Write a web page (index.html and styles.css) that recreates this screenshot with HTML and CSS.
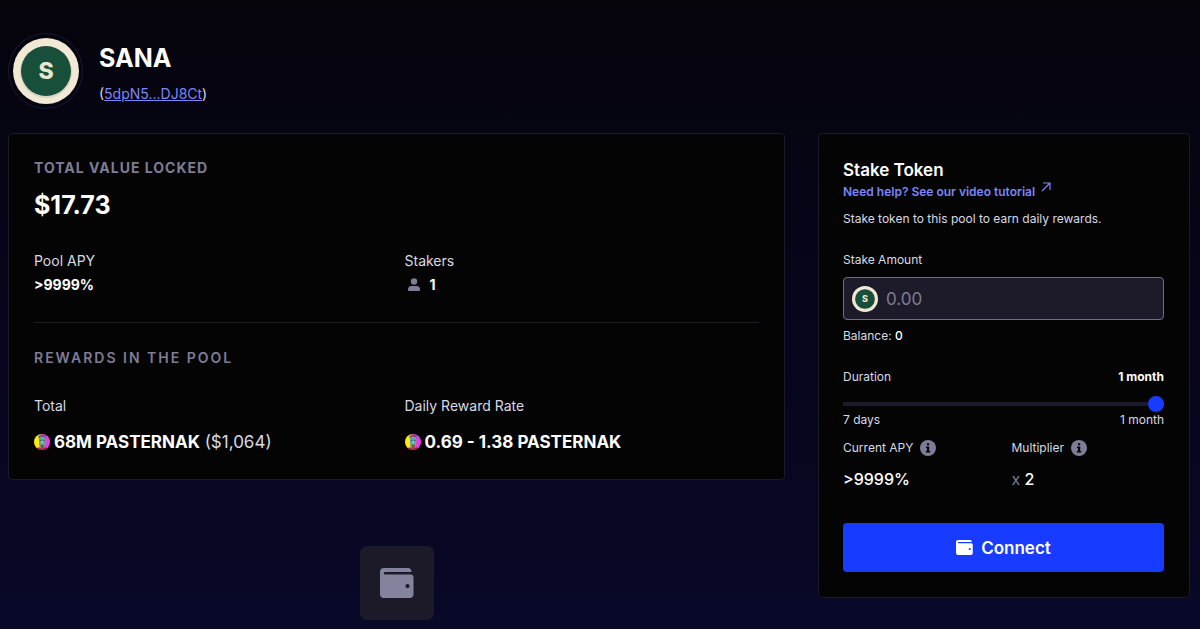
FILE: index.html
```html
<!DOCTYPE html>
<html lang="en">
<head>
<meta charset="utf-8">
<meta name="viewport" content="width=device-width, initial-scale=1">
<title>SANA staking pool</title>
<link rel="stylesheet" href="styles.css">
</head>
<body>
<svg class="defs" aria-hidden="true">
  <defs>
    <linearGradient id="face-bg"><stop offset="0.3" stop-color="#ffe814"/><stop offset="0.62" stop-color="#f03ae6"/></linearGradient>
    <clipPath id="round"><circle cx="8" cy="8" r="8"/></clipPath>
    <symbol id="sana" viewBox="0 0 66 66">
      <circle cx="33" cy="33" r="33" fill="#f1e8d5"/>
      <circle cx="33" cy="34" r="26" fill="#d8d3c2"/>
      <circle cx="33" cy="33" r="25" fill="#174f3b"/>
      <text class="coin-letter" x="33" y="41" text-anchor="middle">S</text>
    </symbol>
    <symbol id="pasternak" viewBox="0 0 16 16">
      <g clip-path="url(#round)">
        <rect width="16" height="16" fill="url(#face-bg)"/>
        <path d="M1 16c1-3 4-2.500 7-2.500s6-.5 7 2.500z" fill="#b3123c"/>
        <path d="M5 4.500C5 2 6 1.500 8 1.500s3.300.8 3.300 3.500v4.500c0 3-1.500 5-3.300 5S5 12.500 5 9.500z" fill="#62a9a5"/>
        <path d="M4.300 4.500C4 1.500 5.500.5 8.500.5S12.300 2 11.800 4.500l-1-1.500H5.500z" fill="#4a5fa0"/>
        <path d="M4.500 3.300l3-1.500 1 .8-3.500 1.600z" fill="#d4475c"/>
        <path d="M5.800 6.300h1.600M8.900 6.300h1.600" stroke="#263f58" stroke-width=".8"/>
        <path d="M8.200 7v2.500" stroke="#a6d8cc"/>
        <path d="M6.300 11q1.700-1.200 3.800 0l-.8 3H7.200z" fill="#7d553f"/>
      </g>
    </symbol>
    <symbol id="wallet" viewBox="0 0 34 30">
      <path fill="currentColor" fill-rule="evenodd" d="M4 0h24a3.500 3.500 0 0 1 3.500 4H5a1.200 1.200 0 0 0 0 2.400h25.500a3 3 0 0 1 3 3V26a4 4 0 0 1-4 4H4a4 4 0 0 1-4-4V4a4 4 0 0 1 4-4zm23.500 16a2.100 2.100 0 1 0 0 4.200 2.100 2.100 0 0 0 0-4.200z"/>
    </symbol>
    <symbol id="info" viewBox="0 0 16 16">
      <circle cx="8" cy="8" r="8" fill="#7f7c96"/>
      <path d="M6.900 3.200h2.300v2.100H6.900zM6 6.500h3.200v4.400h1v1.500H5.900v-1.500h1V8H6z" fill="#050505"/>
    </symbol>
  </defs>
</svg>

<header class="pool-header">
  <div class="avatar"><svg class="avatar-coin" role="img" aria-label="SANA"><use href="#sana"/></svg></div>
  <div class="pool-heading">
    <h1 class="pool-name">SANA</h1>
    <p class="address">(<a href="#token">5dpN5...DJ8Ct</a>)</p>
  </div>
</header>

<main class="layout">
  <div class="main-column">
    <section class="card">
      <h2 class="section-title">TOTAL VALUE LOCKED</h2>
      <p class="tvl">$17.73</p>
      <div class="stats">
        <div>
          <p class="label">Pool APY</p>
          <p class="value">&gt;9999%</p>
        </div>
        <div>
          <p class="label">Stakers</p>
          <p class="value stakers">
            <svg class="user-icon" viewBox="0 0 12 14" aria-hidden="true"><circle cx="6" cy="3.500" r="3.200" fill="#7f7c96"/><path d="M3.500 8h5Q12 8 12 11.500V12q0 1-1 1H1q-1 0-1-1v-.5Q0 8 3.500 8z" fill="#7f7c96"/></svg>
            1
          </p>
        </div>
      </div>
      <hr class="divider">
      <h2 class="section-title wide">REWARDS IN THE POOL</h2>
      <div class="stats">
        <div>
          <p class="label">Total</p>
          <p class="reward"><svg class="token-icon" aria-hidden="true"><use href="#pasternak"/></svg><span><strong>68M PASTERNAK</strong> ($1,064)</span></p>
        </div>
        <div>
          <p class="label">Daily Reward Rate</p>
          <p class="reward"><svg class="token-icon" aria-hidden="true"><use href="#pasternak"/></svg><strong>0.69 - 1.38 PASTERNAK</strong></p>
        </div>
      </div>
    </section>
    <div class="wallet-tile"><svg class="wallet-large" aria-hidden="true"><use href="#wallet"/></svg></div>
  </div>

  <form class="card stake">
    <h2 class="stake-title">Stake Token</h2>
    <a class="help" href="#tutorial">Need help? See our video tutorial
      <svg class="arrow" viewBox="0 0 10 10" aria-hidden="true"><path d="M1 9l8-8M2 1h7v7" fill="none" stroke="currentColor" stroke-width="1.200"/></svg>
    </a>
    <p class="intro">Stake token to this pool to earn daily rewards.</p>

    <label class="amount-label" for="amount">Stake Amount</label>
    <div class="amount-box">
      <svg class="amount-coin" aria-hidden="true"><use href="#sana"/></svg>
      <input class="amount" id="amount" type="text" inputmode="decimal" placeholder="0.00">
    </div>
    <p class="balance">Balance: <b>0</b></p>

    <div class="row duration">
      <label for="duration">Duration</label>
      <output class="chosen" for="duration">1 month</output>
    </div>
    <input class="slider" id="duration" type="range" min="7" max="30" value="30">
    <div class="row limits"><span>7 days</span><span>1 month</span></div>

    <div class="figures">
      <div>
        <p class="figure-label">Current APY <svg class="info" aria-hidden="true"><use href="#info"/></svg></p>
        <p class="figure">&gt;9999%</p>
      </div>
      <div>
        <p class="figure-label">Multiplier <svg class="info" aria-hidden="true"><use href="#info"/></svg></p>
        <p class="figure"><span class="times">x</span> 2</p>
      </div>
    </div>

    <button class="connect" type="button"><svg class="wallet-small" aria-hidden="true"><use href="#wallet"/></svg>Connect</button>
  </form>
</main>
</body>
</html>
```

FILE: styles.css
```css
* {
  box-sizing: border-box;
}

html {
  min-height: 100%;
  background: linear-gradient(#05040b 0%, #06051a 45%, #080828 100%);
}

body {
  margin: 0;
  padding: 33px 10px 9px 8px;
  color: #d8dae5;
  font-family: Inter, "Liberation Sans", sans-serif;
  font-size: 14px;
  line-height: 24px;
}

h1,
h2,
p {
  margin: 0;
}

a {
  color: #7b87f8;
}

.defs {
  position: absolute;
  width: 0;
  height: 0;
}

.coin-letter {
  fill: #e9e6cf;
  font-size: 23px;
  font-weight: 800;
}

/* Header */
.pool-header {
  display: flex;
  align-items: center;
  gap: 16px;
  margin-bottom: 24px;
}

.avatar {
  display: grid;
  place-items: center;
  width: 75px;
  height: 76px;
  border: 1px solid #1b1834;
  border-radius: 50%;
}

.avatar-coin {
  width: 66px;
  height: 66px;
}

.pool-heading {
  padding-top: 6px;
}

.pool-name {
  color: #fff;
  font-size: 25px;
  line-height: 32px;
  font-weight: 700;
}

.address {
  margin-top: 8px;
}

/* Cards */
.layout {
  display: grid;
  grid-template-columns: minmax(0, 1fr) 372px;
  gap: 33px;
  align-items: start;
}

.card {
  padding: 24px 25px 25px;
  border: 1px solid #1c1a29;
  border-radius: 4px;
  background: #040404;
}

.section-title {
  color: #7f7c96;
  font-size: 14px;
  line-height: 20px;
  font-weight: 700;
  letter-spacing: 1px;
}

.section-title.wide {
  font-weight: 600;
  letter-spacing: 2px;
}

.tvl {
  margin-top: 10px;
  color: #fff;
  font-size: 25px;
  line-height: 34px;
  font-weight: 700;
}

.stats {
  display: grid;
  grid-template-columns: 1fr 1fr;
  gap: 16px;
  margin-top: 26px;
}

.tvl + .stats {
  margin-top: 27px;
}

.value {
  color: #fff;
  font-weight: 700;
}

.stakers {
  display: flex;
  align-items: center;
  gap: 10px;
  padding-left: 3px;
}

.user-icon {
  width: 12px;
  height: 14px;
}

.divider {
  margin: 25px 0;
  border: 0;
  border-top: 1px solid #1f1d2b;
}

.reward {
  display: flex;
  align-items: center;
  gap: 4px;
  margin-top: 12px;
  font-size: 17px;
}

.reward strong {
  color: #fff;
}

.token-icon {
  width: 16px;
  height: 16px;
}

.wallet-tile {
  display: grid;
  place-items: center;
  width: 74px;
  height: 74px;
  margin: 66px auto 0;
  border-radius: 7px;
  background: #1c1a28;
  color: #83839e;
}

.wallet-large {
  width: 34px;
  height: 30px;
}

/* Staking form */
.stake {
  padding-left: 24px;
  font-size: 12px;
  line-height: 20px;
}

.stake-title {
  color: #fff;
  font-size: 17px;
  line-height: 24px;
  font-weight: 600;
}

.help {
  display: inline-flex;
  gap: 6px;
  font-weight: 600;
  text-decoration: none;
}

.arrow {
  width: 10px;
  height: 10px;
}

.intro {
  margin-top: 7px;
}

.amount-label {
  display: block;
  margin-top: 21px;
}

.amount-box {
  display: flex;
  align-items: center;
  gap: 8px;
  height: 43px;
  margin-top: 7px;
  padding: 0 8px;
  border: 1px solid #6f6d80;
  border-radius: 4px;
  background: #1d1b2a;
}

.amount-coin {
  flex: none;
  width: 26px;
  height: 26px;
}

.amount {
  flex: 1;
  min-width: 0;
  padding: 0;
  border: 0;
  outline: 0;
  background: none;
  color: #fff;
  font: 17px Inter, "Liberation Sans", sans-serif;
}

.amount::placeholder {
  color: #7f7c92;
}

.balance {
  margin-top: 6px;
}

.balance b {
  color: #fff;
  font-weight: 500;
}

.row {
  display: flex;
  justify-content: space-between;
}

.duration {
  margin-top: 21px;
}

.chosen {
  color: #fff;
  font-weight: 700;
}

.slider {
  display: block;
  width: 100%;
  height: 16px;
  margin: 9px 0 0;
  appearance: none;
  background: linear-gradient(#1d1a2a, #1d1a2a) center / 100% 4px no-repeat;
}

.slider::-webkit-slider-thumb {
  width: 16px;
  height: 16px;
  appearance: none;
  border-radius: 50%;
  background: #173cff;
}

.limits {
  margin-top: -2px;
}

.figures {
  display: grid;
  grid-template-columns: 1fr 1fr;
  gap: 16px;
  margin-top: 8px;
}

.figure-label {
  display: flex;
  align-items: center;
  gap: 7px;
}

.info {
  width: 16px;
  height: 16px;
}

.figure {
  margin-top: 9px;
  color: #fff;
  font-size: 16px;
  line-height: 24px;
  font-weight: 500;
}

.times {
  color: #7f7c96;
  font-weight: 400;
}

.connect {
  display: flex;
  align-items: center;
  justify-content: center;
  gap: 8px;
  width: 100%;
  height: 49px;
  margin-top: 32px;
  padding: 0;
  border: 0;
  border-radius: 4px;
  background: #173cff;
  color: #fff;
  font: 600 17px Inter, "Liberation Sans", sans-serif;
}

.wallet-small {
  width: 17px;
  height: 15px;
}
```
